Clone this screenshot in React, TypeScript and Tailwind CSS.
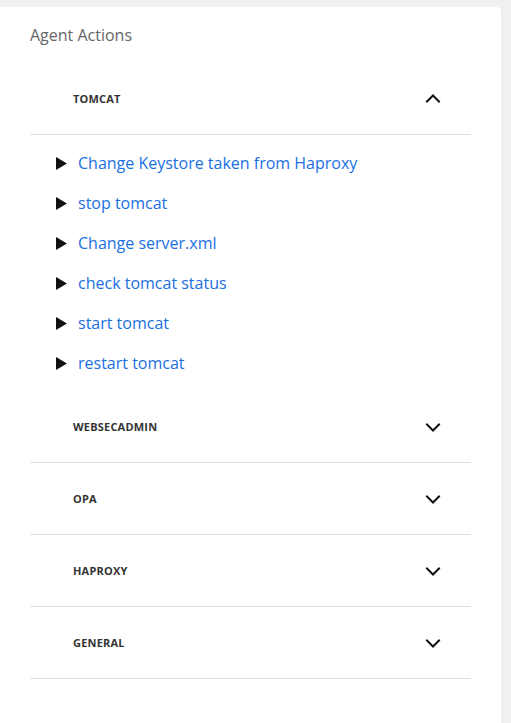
import React from 'react';

const groups = [
  {
    name: 'TOMCAT',
    open: true,
    actions: [
      'Change Keystore taken from Haproxy',
      'stop tomcat',
      'Change server.xml',
      'check tomcat status',
      'start tomcat',
      'restart tomcat',
    ],
  },
  { name: 'WEBSECADMIN', open: false, actions: [] },
  { name: 'OPA', open: false, actions: [] },
  { name: 'HAPROXY', open: false, actions: [] },
  { name: 'GENERAL', open: false, actions: [] },
];

function Chevron({ up }: { up: boolean }) {
  return (
    <svg width="16" height="10" viewBox="0 0 16 10" fill="none" className={up ? '-mt-[3px]' : ''}>
      <path
        d={up ? 'M2 8.5L8 2.5L14 8.5' : 'M2 1.5L8 7.5L14 1.5'}
        stroke="#111"
        strokeWidth="2"
        strokeLinecap="square"
        strokeLinejoin="miter"
      />
    </svg>
  );
}

function Triangle() {
  return (
    <svg width="11" height="13" viewBox="0 0 11 13">
      <path d="M0 0L11 6.5L0 13Z" fill="#111" />
    </svg>
  );
}

export default function App() {
  return (
    <div className="min-h-screen bg-[#f0f0f2] pt-[7px]" style={{ fontFamily: '"Open Sans", sans-serif' }}>
      <div className="w-[501px] min-h-[716px] bg-white rounded-tr-[4px] px-[30px] pt-[16px]">
        <h2 className="text-[16px] leading-[24px] text-[#666] font-normal">Agent Actions</h2>

        <div className="mt-[16px]">
          {groups.map((g) => (
            <div key={g.name}>
              <div className="h-[72px] flex items-center justify-between pl-[43px] pr-[30px] pt-[2px] border-b border-[#e0e0e0]">
                <span className="text-[11px] font-bold text-[#333] tracking-[0.2px]">{g.name}</span>
                <Chevron up={g.open} />
              </div>
              {g.open && (
                <ul className="pt-[8px] pb-[8px]">
                  {g.actions.map((a) => (
                    <li key={a} className="h-[40px] flex items-center pl-[26px] gap-[11px]">
                      <Triangle />
                      <a href="#" className="text-[16px] text-[#1a6fe3] leading-[24px]">
                        {a}
                      </a>
                    </li>
                  ))}
                </ul>
              )}
            </div>
          ))}
        </div>
      </div>
    </div>
  );
}
